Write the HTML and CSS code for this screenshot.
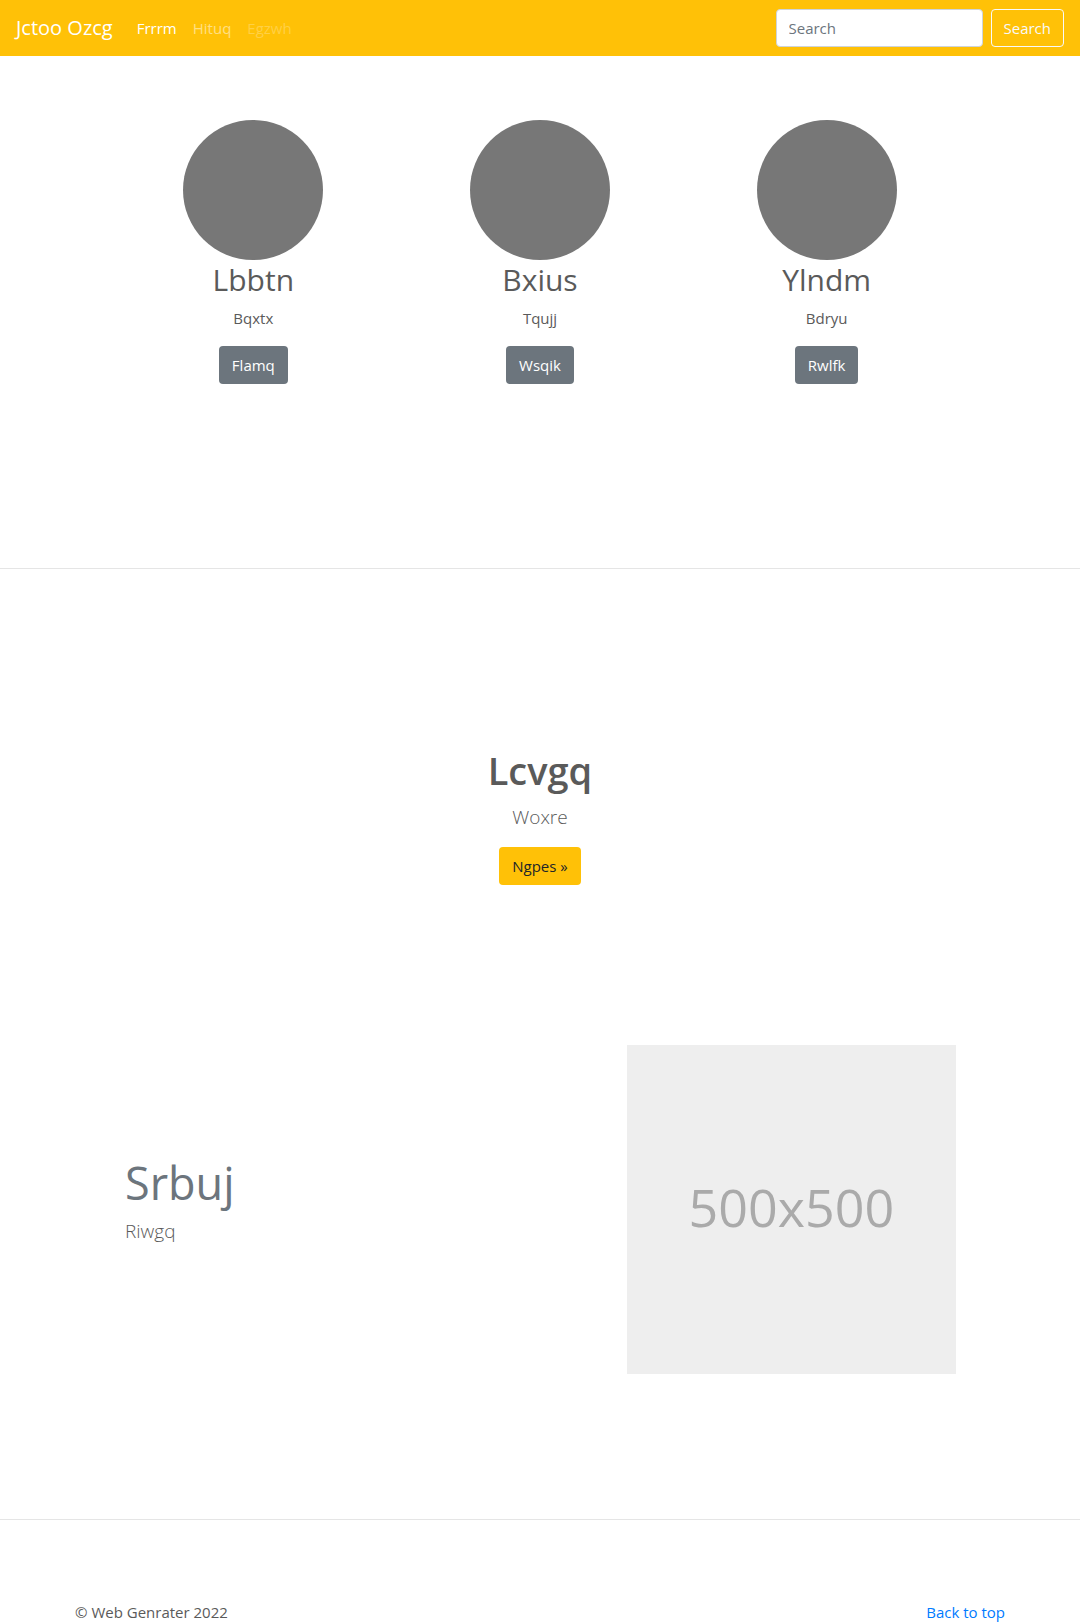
FILE: index.html
```html
<!DOCTYPE html>
<html lang="en">
<head>
<meta charset="utf-8">
<meta name="viewport" content="width=device-width, initial-scale=1">
<title>Jctoo Ozcg</title>
<link rel="stylesheet" href="styles.css">
</head>
<body>
<header class="navbar" id="top">
  <a class="brand" href="#">Jctoo Ozcg</a>
  <nav class="nav">
    <a class="nav-link active" href="#">Frrrm</a>
    <a class="nav-link" href="#">Hituq</a>
    <a class="nav-link disabled" href="#" aria-disabled="true">Egzwh</a>
  </nav>
  <form class="search">
    <input class="field" type="search" placeholder="Search" aria-label="Search">
    <button class="btn btn-outline" type="submit">Search</button>
  </form>
</header>
<main>
  <section class="profiles">
    <article class="profile">
      <div class="avatar"></div>
      <h2 class="profile-name">Lbbtn</h2>
      <p class="text">Bqxtx</p>
      <a class="btn btn-secondary" href="#">Flamq</a>
    </article>
    <article class="profile">
      <div class="avatar"></div>
      <h2 class="profile-name">Bxius</h2>
      <p class="text">Tqujj</p>
      <a class="btn btn-secondary" href="#">Wsqik</a>
    </article>
    <article class="profile">
      <div class="avatar"></div>
      <h2 class="profile-name">Ylndm</h2>
      <p class="text">Bdryu</p>
      <a class="btn btn-secondary" href="#">Rwlfk</a>
    </article>
  </section>
  <hr class="divider">
  <section class="hero">
    <h1 class="hero-title">Lcvgq</h1>
    <p class="lead">Woxre</p>
    <a class="btn btn-warning" href="#">Ngpes »</a>
  </section>
  <section class="feature">
    <div class="feature-text">
      <h2 class="feature-title">Srbuj</h2>
      <p class="lead">Riwgq</p>
    </div>
    <div class="placeholder">500x500</div>
  </section>
  <hr class="divider">
</main>
<footer class="footer">
  <p class="copyright">© Web Genrater 2022</p>
  <a class="back" href="#top">Back to top</a>
</footer>
</body>
</html>
```
FILE: styles.css
```css
*, *::before, *::after { box-sizing: border-box; }

body {
  margin: 0;
  background: #fff;
  color: #5a5a5a;
  font-family: "Segoe UI", "Open Sans", "Noto Sans", sans-serif;
  font-size: 15px;
  line-height: 24px;
}

h1, h2, p { margin: 0; font-weight: 400; }
a { text-decoration: none; }

.navbar {
  display: flex;
  align-items: center;
  min-height: 56px;
  padding: 8px 16px;
  background: #ffc107;
}
.brand { margin-right: 16px; color: #fff; font-size: 20px; line-height: 30px; }
.nav { display: flex; flex: 1; }
.nav-link { padding: 8px; color: rgba(255, 255, 255, .5); }
.nav-link.active { color: #fff; }
.nav-link.disabled { color: rgba(255, 255, 255, .25); }
.search { display: flex; gap: 8px; }

.field {
  width: 207px;
  height: 38px;
  padding: 6px 12px;
  border: 1px solid #ced4da;
  border-radius: 4px;
  background: #fff;
  color: #495057;
  font: inherit;
  appearance: none;
}
.field::placeholder { color: #6c757d; opacity: 1; }

.btn {
  display: inline-block;
  padding: 6px 12px;
  border: 1px solid transparent;
  border-radius: 4px;
  background: transparent;
  font: inherit;
  cursor: pointer;
}
.btn-outline { border-color: #f8f9fa; color: #f8f9fa; }
.btn-secondary { background: #6c757d; color: #fff; }
.btn-warning { background: #ffc107; color: #212529; }

.profiles, .feature { max-width: 860px; margin: 0 auto; }
.profiles {
  display: grid;
  grid-template-columns: repeat(3, 1fr);
  padding: 64px 0 184px;
}
.profile { display: flex; flex-direction: column; align-items: center; }
.avatar { width: 140px; height: 140px; border-radius: 50%; background: #777; }
.profile-name { margin-bottom: 6px; font-size: 30px; line-height: 40px; }
.text { margin-bottom: 16px; }

.divider { margin: 0; border: 0; border-top: 1px solid rgba(0, 0, 0, .1); }

.hero {
  display: flex;
  flex-direction: column;
  align-items: center;
  padding: 177px 16px 160px;
}
.hero-title { margin-bottom: 8px; font-size: 38px; font-weight: 600; line-height: 48px; }
.lead { font-size: 19px; font-weight: 300; line-height: 30px; }
.hero .lead { margin-bottom: 15px; }

.feature {
  display: grid;
  grid-template-columns: 7fr 5fr;
  align-items: center;
  padding-bottom: 145px;
}
.feature-text { padding: 0 15px 20px; }
.feature-title { margin-bottom: 3px; color: #6c757d; font-size: 45px; line-height: 60px; }
.placeholder {
  display: flex;
  align-items: center;
  justify-content: center;
  aspect-ratio: 1;
  margin: 0 14px 0 15px;
  padding-bottom: 6px;
  background: #eee;
  color: #aaa;
  font-size: 52px;
  line-height: 64px;
}

.footer {
  display: flex;
  justify-content: space-between;
  max-width: 960px;
  margin: 0 auto;
  padding: 80px 15px 0;
}
.back { color: #007bff; }
```
